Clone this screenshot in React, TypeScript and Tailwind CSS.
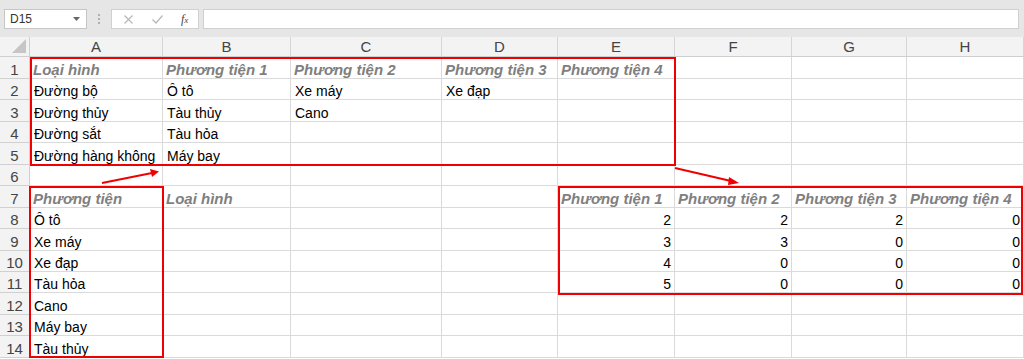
const cols = [
  { key: "A", w: "w-[133px]" },
  { key: "B", w: "w-[128px]" },
  { key: "C", w: "w-[151px]" },
  { key: "D", w: "w-[116px]" },
  { key: "E", w: "w-[117px]" },
  { key: "F", w: "w-[117px]" },
  { key: "G", w: "w-[115px]" },
  { key: "H", w: "w-[117px]" },
];

type Cell = string | { h: string } | { n: number } | null;

const H = (h: string) => ({ h });
const N = (n: number) => ({ n });

const rows: { h: string; cells: Cell[] }[] = [
  { h: "h-[22px]", cells: [H("Loại hình"), H("Phương tiện 1"), H("Phương tiện 2"), H("Phương tiện 3"), H("Phương tiện 4")] },
  { h: "h-[21px]", cells: ["Đường bộ", "Ô tô", "Xe máy", "Xe đạp"] },
  { h: "h-[22px]", cells: ["Đường thủy", "Tàu thủy", "Cano"] },
  { h: "h-[21px]", cells: ["Đường sắt", "Tàu hỏa"] },
  { h: "h-[22px]", cells: ["Đường hàng không", "Máy bay"] },
  { h: "h-[21px]", cells: [] },
  { h: "h-[22px]", cells: [H("Phương tiện"), H("Loại hình"), null, null, H("Phương tiện 1"), H("Phương tiện 2"), H("Phương tiện 3"), H("Phương tiện 4")] },
  { h: "h-[21px]", cells: ["Ô tô", null, null, null, N(2), N(2), N(2), N(0)] },
  { h: "h-[22px]", cells: ["Xe máy", null, null, null, N(3), N(3), N(0), N(0)] },
  { h: "h-[21px]", cells: ["Xe đạp", null, null, null, N(4), N(0), N(0), N(0)] },
  { h: "h-[21px]", cells: ["Tàu hỏa", null, null, null, N(5), N(0), N(0), N(0)] },
  { h: "h-[22px]", cells: ["Cano"] },
  { h: "h-[21px]", cells: ["Máy bay"] },
  { h: "h-[22px]", cells: ["Tàu thủy"] },
];

function CellView({ c }: { c: Cell | undefined }) {
  if (c == null) return null;
  if (typeof c === "string") return <span className="pl-[4px] leading-[16px] text-black">{c}</span>;
  if ("h" in c)
    return (
      <span className="pl-[3px] text-[15px] leading-[17px] font-bold italic text-[#7f7f7f]">{c.h}</span>
    );
  return <span className="ml-auto pr-[3px] leading-[16px] text-black">{c.n}</span>;
}

export default function App() {
  return (
    <div className="relative w-[1024px] h-[359px] overflow-hidden bg-white font-['Liberation_Sans',Arial,sans-serif] text-[14px]">
      {/* formula bar */}
      <div className="flex h-[37px] items-start bg-[#e6e6e6] pt-[9px]">
        <div className="ml-[4px] flex h-[20px] w-[83px] items-center justify-between border border-[#c6c6c6] bg-white pl-[5px] pr-[6px] text-[12px] text-[#333]">
          <span>D15</span>
          <svg width="7" height="4" viewBox="0 0 7 4"><path d="M0 0h7L3.5 4z" fill="#666" /></svg>
        </div>
        <div className="ml-[11px] mt-[5px] flex flex-col gap-[2px]">
          <span className="h-[2px] w-[2px] bg-[#b0b0b0]" />
          <span className="h-[2px] w-[2px] bg-[#b0b0b0]" />
          <span className="h-[2px] w-[2px] bg-[#b0b0b0]" />
        </div>
        <div className="ml-[11px] flex h-[20px] w-[88px] items-center border border-[#d0d0d0] bg-white">
          <svg className="ml-[12px]" width="9" height="9" viewBox="0 0 9 9">
            <path d="M0.5 0.5L8.5 8.5M8.5 0.5L0.5 8.5" stroke="#b8b8b8" strokeWidth="1.2" />
          </svg>
          <svg className="ml-[19px]" width="11" height="9" viewBox="0 0 11 9">
            <path d="M0.5 4.5L4 8L10.5 0.5" stroke="#b8b8b8" strokeWidth="1.2" fill="none" />
          </svg>
          <span className="ml-[18px] font-['Liberation_Serif',serif] text-[12px] italic text-[#444]">
            f<span className="text-[9px]">x</span>
          </span>
        </div>
        <div className="ml-[4px] h-[20px] flex-1 border border-[#d0d0d0] bg-white mr-[5px]" />
      </div>

      {/* column headers */}
      <div className="flex h-[20px] bg-[#f3f3f3] border-b border-[#cfcfcf]">
        <div className="relative w-[30px] border-r border-[#cfcfcf]">
          <svg className="absolute right-[3px] bottom-[3px]" width="14" height="14" viewBox="0 0 14 14">
            <path d="M14 0V14H0z" fill="#c6c6c6" />
          </svg>
        </div>
        {cols.map((c) => (
          <div
            key={c.key}
            className={`${c.w} flex items-center justify-center border-r border-[#d6d6d6] pt-[1px] text-[15px] text-[#444]`}
          >
            {c.key}
          </div>
        ))}
      </div>

      {/* rows */}
      {rows.map((r, i) => (
        <div key={i} className={`flex ${r.h}`}>
          <div className="flex w-[30px] items-end justify-center border-r border-b border-[#d0d0d0] bg-[#f3f3f3] text-[15px] leading-[17px] text-[#444]">
            {i + 1}
          </div>
          {cols.map((c, j) => (
            <div
              key={c.key}
              className={`${c.w} flex items-end overflow-visible whitespace-nowrap border-r border-b border-[#dadada]`}
            >
              <CellView c={r.cells[j]} />
            </div>
          ))}
        </div>
      ))}

      {/* highlight boxes */}
      <div className="absolute left-[30px] top-[57px] h-[109px] w-[646px] border-2 border-[#f00000]" />
      <div className="absolute left-[29px] top-[186px] h-[172px] w-[135px] border-2 border-[#f00000]" />
      <div className="absolute left-[558px] top-[186px] h-[109px] w-[465px] border-2 border-[#f00000]" />

      {/* arrows */}
      <svg className="absolute left-0 top-0" width="1024" height="359">
        <line x1="102" y1="183" x2="152" y2="173" stroke="#f00000" strokeWidth="2" />
        <path d="M159 171.5L150 169L152 177z" fill="#f00000" />
        <line x1="675" y1="168" x2="731" y2="181" stroke="#f00000" strokeWidth="2" />
        <path d="M739 183L729 177L728 185z" fill="#f00000" />
      </svg>
    </div>
  );
}
